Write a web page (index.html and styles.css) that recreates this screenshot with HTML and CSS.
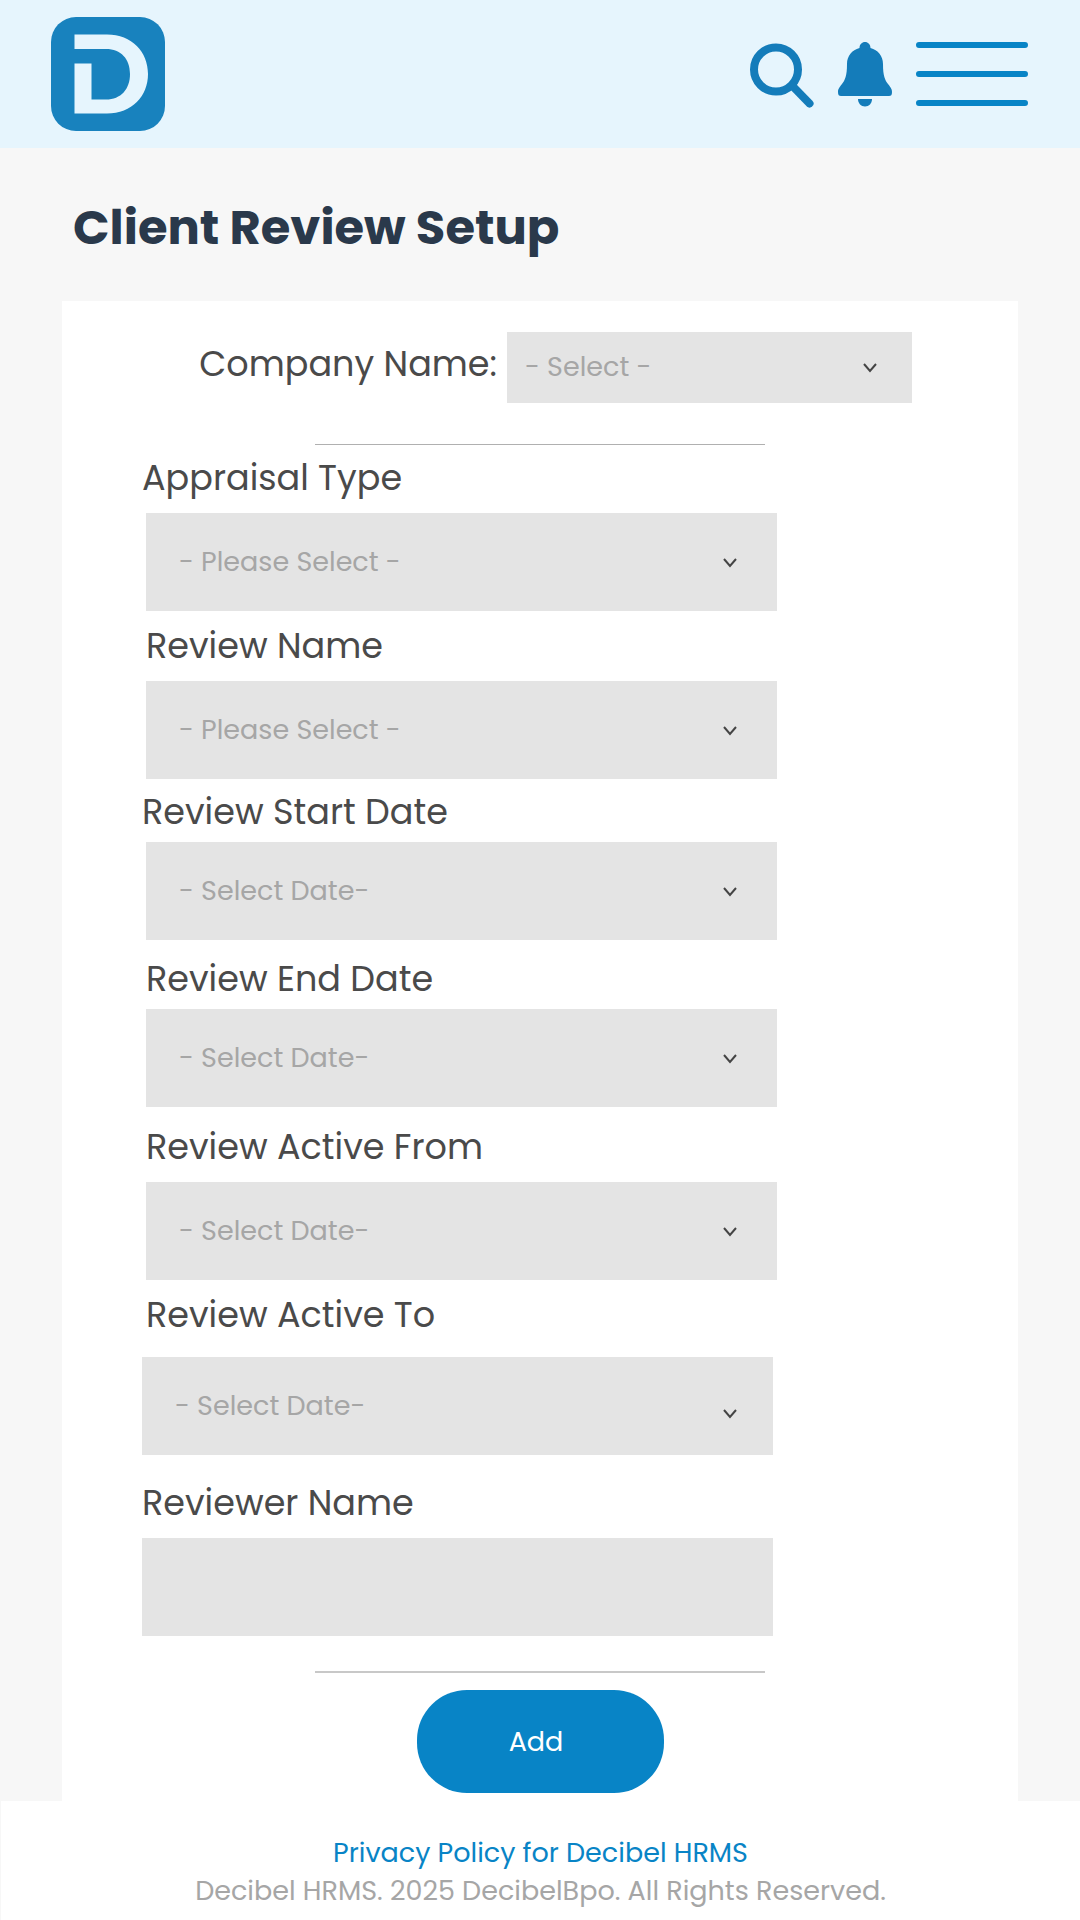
FILE: index.html
```html
<!DOCTYPE html>
<html lang="en">
<head>
  <meta charset="utf-8">
  <meta name="viewport" content="width=device-width, initial-scale=1">
  <title>Client Review Setup</title>
  <link rel="stylesheet" href="styles.css">
</head>
<body>
  <header class="topbar">
    <a class="topbar__logo" href="#" aria-label="Decibel HRMS">
      <svg width="114" height="114" viewBox="0 0 114 114" aria-hidden="true">
        <rect width="114" height="114" rx="25" fill="#1882be"/>
        <path d="M23.500 17.500H56C81 17.500 97 35 97 57S81 96.500 56 96.500H23.500V46.500H40.500V82.500H55C70 82.500 79 72 79 57S70 32 55 32H23.500Z" fill="#e6f5fd"/>
      </svg>
    </a>
    <nav class="topbar__actions" aria-label="Main">
      <button class="icon-button" type="button" aria-label="Search">
        <svg width="64" height="64" viewBox="0 0 64 64" fill="none" stroke="#147cba" stroke-width="8" aria-hidden="true">
          <circle cx="26" cy="27.500" r="22"/>
          <path d="M42 43.500L59.500 61.500" stroke-linecap="round"/>
        </svg>
      </button>
      <button class="icon-button" type="button" aria-label="Notifications">
        <svg width="54" height="64" viewBox="0 0 54 64" fill="#147cba" aria-hidden="true">
          <path d="M27 0C30 0 32.500 2.500 32.500 6C40 8 45 14 45 22C45 34 47 38 50 42C53 46 54 47 54 50C54 53 53 54 51 54H3C1 54 0 53 0 50C0 47 1 46 4 42C7 38 9 34 9 22C9 14 14 8 21.500 6C21.500 2.500 24 0 27 0Z"/>
          <path d="M20 57H34C34 61.500 31 64.500 27 64.500S20 61.500 20 57Z"/>
        </svg>
      </button>
      <button class="icon-button" type="button" aria-label="Menu">
        <svg width="112" height="64" viewBox="0 0 112 64" stroke="#0884c6" stroke-width="6" stroke-linecap="round" aria-hidden="true">
          <path d="M3 3H109M3 32H109M3 61H109"/>
        </svg>
      </button>
    </nav>
  </header>

  <main class="page">
    <h1 class="page__title">Client Review Setup</h1>

    <form class="card">
      <div class="company">
        <label class="label" for="company">Company Name:</label>
        <select class="control control--compact" id="company"><option>- Select -</option></select>
      </div>

      <hr class="rule">

      <div class="fields">
        <div class="field field--first">
          <label class="label" for="type">Appraisal Type</label>
          <select class="control control--inset" id="type"><option>- Please Select -</option></select>
        </div>
        <div class="field">
          <label class="label label--inset" for="name">Review Name</label>
          <select class="control control--inset" id="name"><option>- Please Select -</option></select>
        </div>
        <div class="field field--tight">
          <label class="label" for="start">Review Start Date</label>
          <select class="control control--inset" id="start"><option>- Select Date-</option></select>
        </div>
        <div class="field field--tight">
          <label class="label label--inset" for="end">Review End Date</label>
          <select class="control control--inset" id="end"><option>- Select Date-</option></select>
        </div>
        <div class="field field--spaced">
          <label class="label label--inset" for="from">Review Active From</label>
          <select class="control control--inset" id="from"><option>- Select Date-</option></select>
        </div>
        <div class="field field--loose">
          <label class="label label--inset" for="to">Review Active To</label>
          <select class="control control--low" id="to"><option>- Select Date-</option></select>
        </div>
        <div class="field field--reviewer">
          <label class="label" for="reviewer">Reviewer Name</label>
          <input class="control" id="reviewer" type="text">
        </div>
      </div>

      <hr class="rule rule--bottom">

      <button class="submit" type="submit">Add</button>
    </form>
  </main>

  <footer class="footer">
    <a class="footer__link" href="#">Privacy Policy for Decibel HRMS</a>
    <p class="footer__text">Decibel HRMS. 2025 DecibelBpo. All Rights Reserved.</p>
  </footer>
</body>
</html>
```
FILE: styles.css
```css
*,
*::before,
*::after {
  box-sizing: border-box;
}

body {
  margin: 0;
  min-height: 100vh;
  display: flex;
  flex-direction: column;
  background: #f7f7f7;
  color: #4a4a4a;
  font-family: Poppins, Inter, sans-serif;
}

/* Top bar */
.topbar {
  display: flex;
  align-items: center;
  justify-content: space-between;
  height: 148px;
  padding: 0 52px 0 51px;
  background: #e6f5fd;
}

.topbar__logo,
.topbar__logo svg,
.icon-button svg {
  display: block;
  overflow: visible;
}

.topbar__actions {
  display: flex;
  align-items: center;
  gap: 24px;
}

.icon-button {
  padding: 0;
  border: 0;
  background: none;
  cursor: pointer;
}

/* Page */
.page {
  display: flex;
  flex-direction: column;
  flex: 1;
  padding: 0 62px;
}

.page__title {
  margin: 0;
  padding: 50px 11px 43px;
  color: #2a394b;
  font-size: 48px;
  font-weight: 700;
  line-height: 60px;
}

.card {
  display: flex;
  flex-direction: column;
  flex: 1;
  padding: 31px 0 8px;
  background: #fff;
}

.company {
  display: flex;
  justify-content: flex-end;
  gap: 10px;
  padding-right: 106px;
}

.company .label {
  padding-top: 11px;
}

.rule {
  width: 47%;
  height: 1px;
  margin: 41px auto 0;
  border: 0;
  background: #b0b0b0;
}

.rule--bottom {
  height: 2px;
  margin-top: 35px;
  background: #c8c8c8;
}

/* Form fields */
.fields {
  padding-left: 80px;
}

.field {
  display: flex;
  flex-direction: column;
  align-items: flex-start;
  gap: 14px;
  margin-top: 14px;
}

.field--first {
  margin-top: 12px;
}

.field--tight {
  gap: 9px;
  margin-top: 12px;
}

.field--tight + .field--tight {
  margin-top: 18px;
}

.field--spaced {
  margin-top: 19px;
}

.field--loose {
  gap: 21px;
}

.field--reviewer {
  margin-top: 27px;
}

.label {
  font-size: 35px;
  line-height: 42px;
  white-space: nowrap;
}

.label--inset {
  margin-left: 4px;
}

.control {
  width: 72%;
  height: 98px;
  padding: 0 33px 2px;
  border: 0;
  border-radius: 0;
  background-color: #e4e4e4;
  color: #a6a6a6;
  font: inherit;
  font-size: 27px;
}

select.control {
  appearance: none;
  background-image: url("data:image/svg+xml,%3Csvg xmlns='http://www.w3.org/2000/svg' width='14' height='10' fill='none' stroke='%23444' stroke-width='2'%3E%3Cpath d='M1 1L7 8L13 1'/%3E%3C/svg%3E");
  background-repeat: no-repeat;
  background-position: right 40px top 45px;
}

select.control--low {
  background-position: right 36px top 52px;
}

.control--inset {
  margin-left: 4px;
}

select.control--compact {
  width: 405px;
  height: 71px;
  padding: 0 18px 2px;
  background-position: right 35px top 31px;
}

.submit {
  align-self: center;
  width: 247px;
  height: 103px;
  margin-top: 17px;
  padding: 0 8px 0 0;
  border: 0;
  border-radius: 50px;
  background: #0884c6;
  color: #fff;
  font: inherit;
  font-size: 27px;
  cursor: pointer;
}

/* Footer */
.footer {
  padding: 33px 16px 10px;
  border-left: 1px solid #f7f7f7;
  background: #fff;
  font-size: 27px;
  line-height: 38px;
  text-align: center;
}

.footer__link {
  color: #0884c6;
  text-decoration: none;
}

.footer__text {
  margin: 0;
  color: #a6a6a6;
}
```
